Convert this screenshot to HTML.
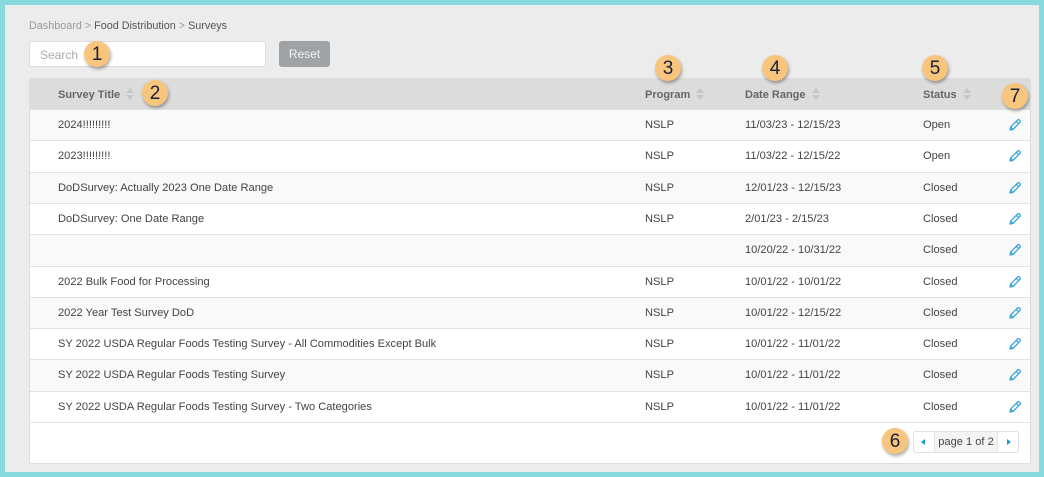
<!DOCTYPE html>
<html><head><style>
*{margin:0;padding:0;box-sizing:border-box}
body{width:1044px;height:477px;background:#86d9dd;font-family:"Liberation Sans",sans-serif;position:relative;overflow:hidden;color:#444}
#bg{position:absolute;left:5px;top:5px;width:1034px;height:467px;background:#ececec}
.crumb{position:absolute;left:29px;top:20px;font-size:10.8px;color:#999}
.crumb b{font-weight:normal;color:#555}
.search{position:absolute;left:29px;top:41px;width:237px;height:26px;background:#fff;border:1px solid #ddd;border-radius:3px;font-size:12px;color:#aaa;padding:6px 10px}
.reset{position:absolute;left:279px;top:41px;width:51px;height:26px;background:#9fa3a6;border-radius:3px;color:#f2f2f2;font-size:12px;text-align:center;line-height:26px}
.panel{position:absolute;left:29px;top:78px;width:1002px;height:386px;background:#fff;border:1px solid #ddd;border-radius:2px;overflow:hidden}
.hdr{position:absolute;left:0;top:0;width:100%;height:30px;background:#dcdcdc}
.h{position:absolute;top:9px;font-size:11px;font-weight:bold;color:#666}
.sort{display:inline-block;margin-left:6px;vertical-align:-2px;width:8px;height:12px;position:relative}
.sort:before{content:"";position:absolute;left:0;top:0;border:4px solid transparent;border-bottom:5px solid #c6c6c6;border-top:0}
.sort:after{content:"";position:absolute;left:0;top:7px;border:4px solid transparent;border-top:5px solid #c6c6c6;border-bottom:0}
.row{position:absolute;left:0;width:100%;height:31.3px;border-top:1px solid #e3e3e3;font-size:11.1px;color:#444}
.row span{position:absolute;top:9px}
.odd{background:#f9f9f9}
.foot{position:absolute;left:0;top:343px;width:100%;border-top:1px solid #e3e3e3}
.pg{position:absolute;left:883px;top:352px;width:106px;height:22px;border:1px solid #e0e0e0;border-radius:3px;background:#fff;font-size:11.1px}
.pg .mid{position:absolute;left:20px;top:0;width:64px;height:20px;background:#f4f4f4;border-left:1px solid #e6e6e6;border-right:1px solid #e6e6e6;text-align:center;line-height:20px;color:#444}
.tl{position:absolute;top:7px;border:3px solid transparent}
.badge{position:absolute;width:26px;height:26px;border-radius:50%;background:#f8c57c;box-shadow:1px 2px 3px rgba(0,0,0,.35);color:#1a1f3a;font-size:19px;text-align:center;line-height:28px}
svg.p{position:absolute;left:978px;top:8px}
</style></head><body>
<div id="bg"></div>
<div class="crumb">Dashboard &gt; <b>Food Distribution</b> &gt; <b>Surveys</b></div>
<div class="search">Search</div>
<div class="reset">Reset</div>
<div class="panel">
<div class="hdr">
<div class="h" style="left:28px">Survey Title<i class="sort"></i></div>
<div class="h" style="left:615px">Program<i class="sort"></i></div>
<div class="h" style="left:715px">Date Range<i class="sort"></i></div>
<div class="h" style="left:893px">Status<i class="sort"></i></div>
</div>
<div id="rows"></div>
<div class="foot"></div>
<div class="pg"><i class="tl" style="left:7px;border-right:4px solid #1a9ad6;border-left:0"></i><div class="mid">page 1 of 2</div><i class="tl" style="left:93px;border-left:4px solid #1a9ad6;border-right:0"></i></div>
</div>
<script>
var d=[["2024!!!!!!!!!","NSLP","11/03/23 - 12/15/23","Open"],["2023!!!!!!!!!","NSLP","11/03/22 - 12/15/22","Open"],["DoDSurvey: Actually 2023 One Date Range","NSLP","12/01/23 - 12/15/23","Closed"],["DoDSurvey: One Date Range","NSLP","2/01/23 - 2/15/23","Closed"],["","","10/20/22 - 10/31/22","Closed"],["2022 Bulk Food for Processing","NSLP","10/01/22 - 10/01/22","Closed"],["2022 Year Test Survey DoD","NSLP","10/01/22 - 12/15/22","Closed"],["SY 2022 USDA Regular Foods Testing Survey - All Commodities Except Bulk","NSLP","10/01/22 - 11/01/22","Closed"],["SY 2022 USDA Regular Foods Testing Survey","NSLP","10/01/22 - 11/01/22","Closed"],["SY 2022 USDA Regular Foods Testing Survey - Two Categories","NSLP","10/01/22 - 11/01/22","Closed"]];
var h="";d.forEach(function(r,i){h+='<div class="row'+(i%2==0?' odd':'')+'" style="top:'+(30+i*31.3)+'px"><span style="left:28px">'+r[0]+'</span><span style="left:615px">'+r[1]+'</span><span style="left:715px">'+r[2]+'</span><span style="left:893px">'+r[3]+'</span><svg class="p" width="14" height="14" viewBox="0 0 14 14"><path d="M2 12 L2.6 9 L9.5 2.1 Q10.5 1.2 11.5 2.1 L11.9 2.5 Q12.8 3.5 11.9 4.5 L5 11.4 Z M8.3 3.3 L10.7 5.7 M2.6 9 L5 11.4" fill="none" stroke="#2aa3d8" stroke-width="1.2" stroke-linejoin="round"/></svg></div>'});
document.getElementById("rows").innerHTML=h;
</script>
<div class="badge" style="left:84px;top:41px">1</div>
<div class="badge" style="left:142px;top:80px">2</div>
<div class="badge" style="left:655px;top:55px">3</div>
<div class="badge" style="left:762px;top:55px">4</div>
<div class="badge" style="left:922px;top:55px">5</div>
<div class="badge" style="left:1002px;top:83px">7</div>
<div class="badge" style="left:882px;top:428px">6</div>
</body></html>
